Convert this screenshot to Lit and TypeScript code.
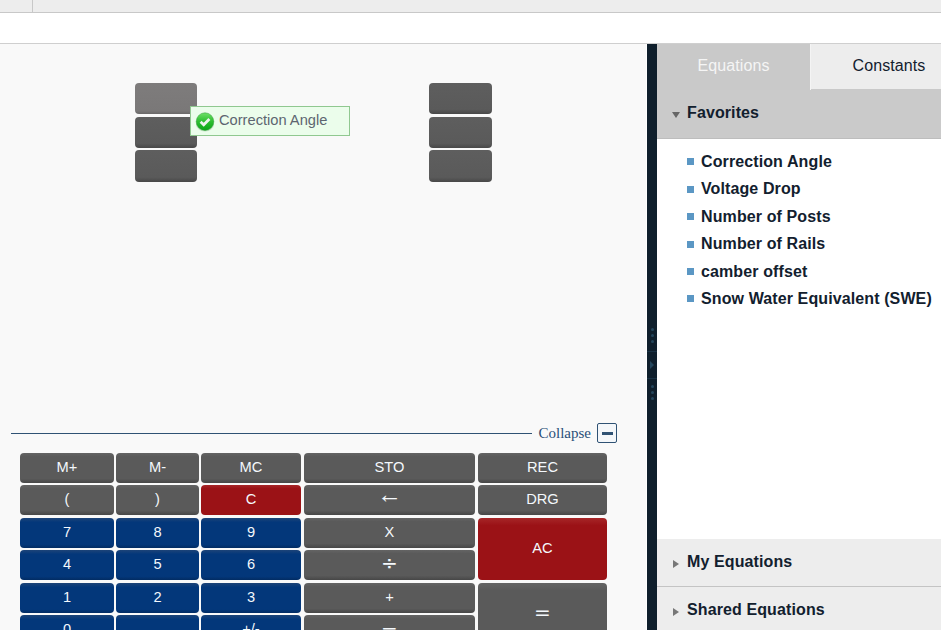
import { LitElement, html, css, svg } from "lit";
import { customElement } from "lit/decorators.js";

type Key = { t: string; c?: string; cls?: string };

const keys: Key[] = [
  { t: "M+" }, { t: "M-" }, { t: "MC" }, { t: "STO", cls: "c4" }, { t: "REC", cls: "c5" },
  { t: "(" }, { t: ")" }, { t: "C", c: "red" }, { t: "←", cls: "c4 arrow" }, { t: "DRG", cls: "c5" },
  { t: "7", c: "blue" }, { t: "8", c: "blue" }, { t: "9", c: "blue" }, { t: "X", cls: "c4" }, { t: "AC", c: "red", cls: "c5 span2" },
  { t: "4", c: "blue" }, { t: "5", c: "blue" }, { t: "6", c: "blue" }, { t: "÷", cls: "c4 big" },
  { t: "1", c: "blue" }, { t: "2", c: "blue" }, { t: "3", c: "blue" }, { t: "+", cls: "c4" }, { t: "=", cls: "c5 span2 big" },
  { t: "0", c: "blue" }, { t: "", c: "blue" }, { t: "+/-", c: "blue" }, { t: "−", cls: "c4 big" },
];

const favorites = ["Correction Angle", "Voltage Drop", "Number of Posts", "Number of Rails", "camber offset", "Snow Water Equivalent (SWE)"];

@customElement("app-root")
export class AppRoot extends LitElement {
  static styles = css`
    :host { display: block; width: 941px; height: 630px; overflow: hidden; background: #fff; font-family: "Liberation Sans", Arial, sans-serif; }
    .topbar { height: 12px; background: #ededed; border-bottom: 1px solid #c8c8c8; display: flex; }
    .topcell { width: 32px; border-right: 1px solid #c8c8c8; }
    .subbar { height: 30px; background: #fff; border-bottom: 1px solid #cfcfcf; }
    .main { display: flex; height: 586px; overflow: hidden; }
    .left { width: 646px; background: #f9f9f9; position: relative; display: flex; flex-direction: column; border-right: 1px solid #fff; box-sizing: content-box; }
    .stacks { flex: none; display: flex; padding: 39px 0 0 135px; height: 312px; box-sizing: content-box; gap: 232px; }
    .stack { display: flex; flex-direction: column; width: 62px; }
    .stack + .stack { width: 63px; }
    .slot { flex: none; height: 31px; border-radius: 4px; background: linear-gradient(#5e5e5e, #5a5a5a 85%, #484848); margin-bottom: 2px; }
    .slot:first-child { margin-bottom: 3px; }
    .slot:last-child { height: 32px; margin-bottom: 0; }
    .slot.light { background: linear-gradient(#7e7c7c, #7a7878 90%, #6a6868); }
    .tip { position: absolute; left: 190px; top: 62px; width: 158px; height: 28px; background: #ebfdeb; border: 1px solid #90c890; display: flex; align-items: center; color: #5d6570; font-size: 14.67px; }
    .tip svg { flex: none; margin: 2px 4px 0 4px; }
    .tip span { margin-bottom: 2px; }
    .collapse { flex: none; display: flex; align-items: center; height: 20px; padding: 0 29px 0 11px; margin-top: 28px; color: #2a4f78; font: 15px "Liberation Serif", serif; }
    .collapse .rule { flex: 1; height: 1px; background: #2f5274; margin-right: 7px; }
    .collapse .box { flex: none; box-sizing: border-box; width: 20px; height: 20px; margin-left: 6px; border: 1.5px solid #2f5274; border-radius: 2px; background: #f4f7fa; display: flex; align-items: center; justify-content: center; }
    .collapse .box i { display: block; width: 11px; height: 3px; background: #2f5274; }
    .pad { flex: none; display: grid; grid-template-columns: 94px 83px 100px 172px 130px; grid-auto-rows: 30px; column-gap: 2px; row-gap: 2.5px; margin: 9.9px 0 0 20px; }
    .key { box-sizing: border-box; padding-bottom: 2px; border-radius: 4px; background: linear-gradient(#646464, #5a5a5a 12%, #5a5a5a 85%, #474747); color: #f4f8fc; font-size: 14.67px; display: flex; align-items: center; justify-content: center; }
    .key.blue { background: linear-gradient(#1d4478, #03377a 14%, #03377a 88%, #022c63); }
    .key.red { background: linear-gradient(#a62628, #9b1216 12%, #9b1216); }
    .key.c4 { grid-column: 4; margin-left: 1px; }
    .key.c5 { grid-column: 5; margin-left: 1px; }
    .key.span2 { grid-row: span 2; }
    .key.big { font: 20px "DejaVu Sans", sans-serif; padding-bottom: 5px; }
    .key.arrow { font: 25px "Liberation Serif", serif; padding-bottom: 11px; }
    .splitter { flex: none; width: 10px; background: #0f1f2c; display: flex; flex-direction: column; align-items: center; justify-content: center; gap: 3px; padding-top: 54px; box-sizing: border-box; }
    .dot { width: 3px; height: 3px; border-radius: 50%; background: #24465c; }
    .gripwrap { box-sizing: border-box; width: 100%; height: 28px; margin: 4.5px 0 3.5px; border-top: 1px solid #1a3244; border-bottom: 1px solid #1a3244; display: flex; align-items: center; justify-content: center; }
    .grip { width: 0; height: 0; border-left: 4px solid #24465c; border-top: 4px solid transparent; border-bottom: 4px solid transparent; }
    .right { width: 284px; flex: none; display: flex; flex-direction: column; background: #fff; }
    .tabs { flex: none; display: flex; height: 46px; font-size: 16px; letter-spacing: .1px; }
    .tab { display: flex; align-items: center; justify-content: center; padding-bottom: 2px; box-sizing: border-box; }
    .tab.on { width: 154px; background: #c9c9c9; color: #f5f5f5; border-right: 1px solid #f4f4f4; }
    .tab.off { flex: 1; background: #ededed; color: #12202e; border-bottom: 1px solid #c9c9c9; padding-left: 26px; }
    .acc { flex: none; display: flex; align-items: center; font-weight: bold; font-size: 16px; letter-spacing: .11px; color: #12202e; box-sizing: border-box; padding-left: 15px; gap: 8px; }
    .acc.fav { height: 49px; background: #cacaca; border-bottom: 1px solid #bdbdbd; padding-bottom: 2px; gap: 7px; }
    .acc.rest { height: 48px; background: #ededed; border-bottom: 1px solid #c4c4c4; padding-bottom: 1px; }
    .list { flex: none; height: 400px; box-sizing: border-box; list-style: none; margin: 0; padding: 9.3px 0 0 30px; font-weight: bold; font-size: 16px; letter-spacing: .11px; color: #12202e; }
    .list li { display: flex; align-items: center; height: 27.4px; gap: 7px; }
    .list li::before { content: ""; width: 7px; height: 7px; background: #5b97c4; }
    .tri-d { width: 0; height: 0; border-top: 6px solid #666; border-left: 4px solid transparent; border-right: 4px solid transparent; margin-top: 4px; }
    .tri-r { width: 0; height: 0; border-left: 6px solid #777; border-top: 4px solid transparent; border-bottom: 4px solid transparent; margin-left: 1px; margin-top: 3px; }
  `;

  private check() {
    return svg`<svg width="20" height="20" viewBox="0 0 20 20">
      <defs><linearGradient id="g" x1="0" y1="0" x2="0" y2="1"><stop offset="0" stop-color="#6fe068"/><stop offset=".5" stop-color="#2cbd30"/><stop offset="1" stop-color="#0aa517"/></linearGradient></defs>
      <ellipse cx="10" cy="12" rx="9" ry="7.6" fill="#9fc79f" opacity=".5"/>
      <circle cx="10" cy="9.6" r="8.8" fill="url(#g)" stroke="#2d9a35" stroke-width="0.5"/>
      <path d="M5.6 9.8 L8.7 12.7 L14.4 7" fill="none" stroke="#eef3ee" stroke-width="2.8"/>
    </svg>`;
  }

  render() {
    return html`
      <div class="topbar"><div class="topcell"></div></div>
      <div class="subbar"></div>
      <div class="main">
        <div class="left">
          <div class="stacks">
            <div class="stack"><div class="slot light"></div><div class="slot"></div><div class="slot"></div></div>
            <div class="stack"><div class="slot"></div><div class="slot"></div><div class="slot"></div></div>
          </div>
          <div class="tip">${this.check()}<span>Correction Angle</span></div>
          <div class="collapse"><div class="rule"></div><span>Collapse</span><div class="box"><i></i></div></div>
          <div class="pad">
            ${keys.map((k) => html`<div class="key ${k.c ?? ""} ${k.cls ?? ""}">${k.t}</div>`)}
          </div>
        </div>
        <div class="splitter">
          <span class="dot"></span><span class="dot"></span><span class="dot"></span>
          <div class="gripwrap"><span class="grip"></span></div>
          <span class="dot"></span><span class="dot"></span><span class="dot"></span>
        </div>
        <div class="right">
          <div class="tabs"><div class="tab on">Equations</div><div class="tab off">Constants</div></div>
          <div class="acc fav"><span class="tri-d"></span>Favorites</div>
          <ul class="list">${favorites.map((f) => html`<li>${f}</li>`)}</ul>
          <div class="acc rest"><span class="tri-r"></span>My Equations</div>
          <div class="acc rest"><span class="tri-r"></span>Shared Equations</div>
        </div>
      </div>
    `;
  }
}
